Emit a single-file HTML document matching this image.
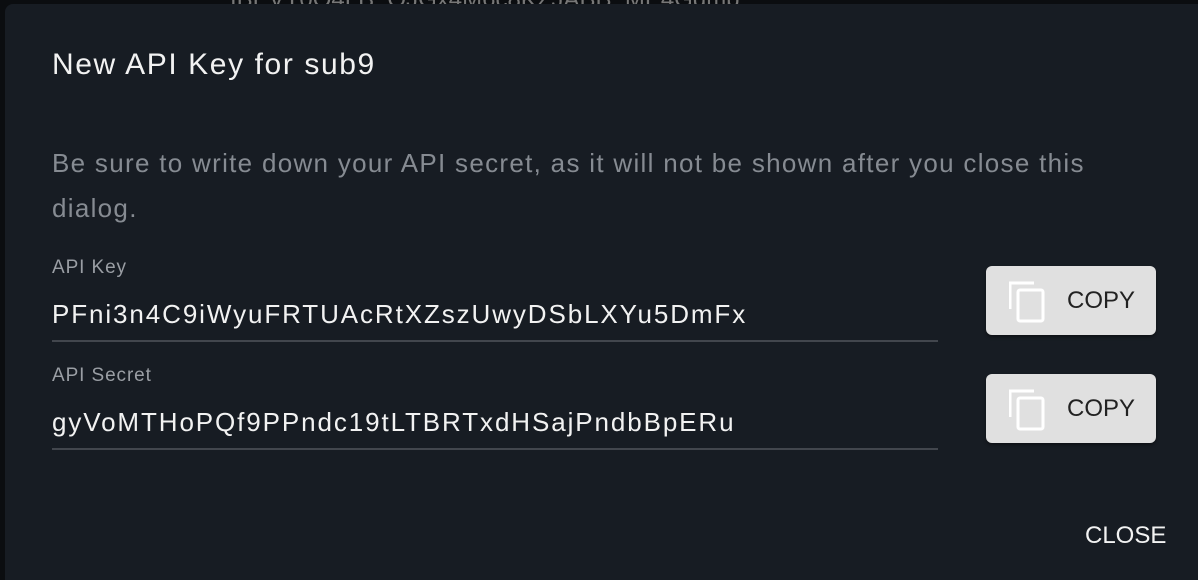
<!DOCTYPE html>
<html><head><style>
*{margin:0;padding:0;box-sizing:border-box}
html,body{width:1198px;height:580px;overflow:hidden}
body{background:#0b0d10;font-family:"Liberation Sans",sans-serif;position:relative}
.bgtext{position:absolute;top:-14px;left:230px;color:#777;font-size:24px;white-space:nowrap}
.dlg{position:absolute;left:5px;top:4px;width:1193px;height:576px;background:#171c23;border-radius:8px 0 0 0}
.a{position:absolute;white-space:nowrap}
.title{left:47px;top:44px;font-size:30px;letter-spacing:1.6px;color:#f2f2f2}
.body{left:47px;top:137px;font-size:26px;letter-spacing:1.3px;line-height:45px;color:#868b92;width:1060px;white-space:normal}
.lbl{font-size:19px;letter-spacing:0.9px;color:#9a9ea4}
.val{font-size:26px;letter-spacing:1.9px;color:#f2f2f2}
.line{position:absolute;left:47px;width:886px;height:2px;background:#42464d}
.btn{position:absolute;left:981px;width:170px;height:69px;background:#e0e0e0;border-radius:6px;box-shadow:0 2px 3px rgba(0,0,0,.4)}
.btn span{position:absolute;left:81px;top:21px;font-size:24px;color:#222}
.btn svg{position:absolute;left:23px;top:15px}
.close{left:1080px;top:518px;font-size:24px;color:#f2f2f2}
</style></head><body>
<div class="bgtext">IBEVT0Q4LB_QJGx4M6c8KZJABB_ME4Gqmb&nbsp;&nbsp;&nbsp;&nbsp;&nbsp;&nbsp;&nbsp;&nbsp;&nbsp;&nbsp;*****</div>
<div class="dlg">
<div class="a title">New API Key for sub9</div>
<div class="a body">Be sure to write down your API secret, as it will not be shown after you close this dialog.</div>
<div class="a lbl" style="left:47px;top:253px">API Key</div>
<div class="a val" style="left:47px;top:295px">PFni3n4C9iWyuFRTUAcRtXZszUwyDSbLXYu5DmFx</div>
<div class="line" style="top:336px"></div>
<div class="a lbl" style="left:47px;top:361px">API Secret</div>
<div class="a val" style="left:47px;top:403px">gyVoMTHoPQf9PPndc19tLTBRTxdHSajPndbBpERu</div>
<div class="line" style="top:444px"></div>
<div class="btn" style="top:262px"><svg width="38" height="42" viewBox="0 0 38 42"><path d="M1 28V2h24" fill="none" stroke="#fff" stroke-width="3"/><rect x="9" y="9" width="25" height="31" rx="2" fill="none" stroke="#fff" stroke-width="3"/></svg><span>COPY</span></div>
<div class="btn" style="top:370px"><svg width="38" height="42" viewBox="0 0 38 42"><path d="M1 28V2h24" fill="none" stroke="#fff" stroke-width="3"/><rect x="9" y="9" width="25" height="31" rx="2" fill="none" stroke="#fff" stroke-width="3"/></svg><span>COPY</span></div>
<div class="a close">CLOSE</div>
</div>
</body></html>
